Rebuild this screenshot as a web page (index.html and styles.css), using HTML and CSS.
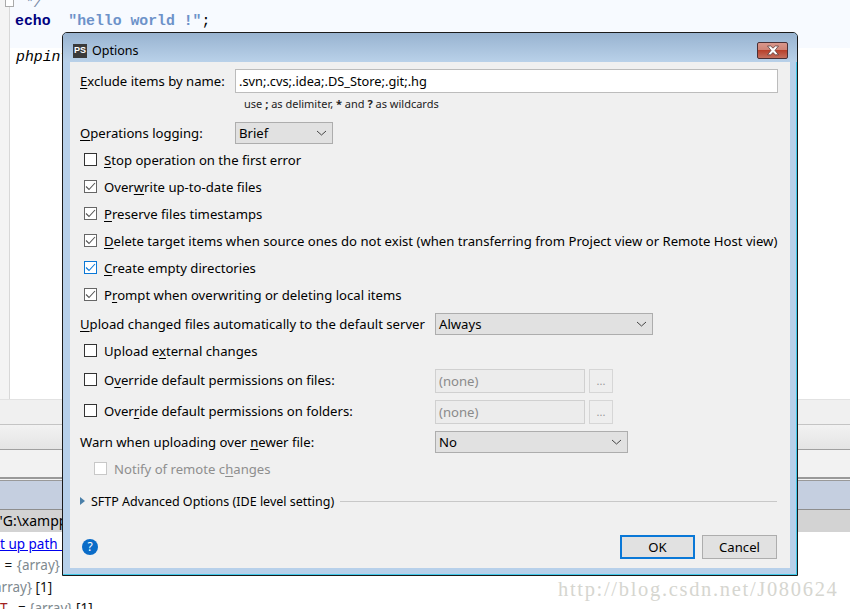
FILE: index.html
```html
<!DOCTYPE html>
<html lang="en">
<head>
<meta charset="utf-8">
<title>Options</title>
<link rel="stylesheet" href="styles.css">
</head>
<body>
<div class="ide">
  <div class="editor">
    <div class="gutter"><span class="fold"></span></div>
    <div class="code">
      <div class="code-band">
        <div class="code-line cmt"> */</div>
        <div class="code-line"><b class="kw">echo</b>  <span class="str">"hello world !"</span>;</div>
        <div class="code-line"> </div>
        <div class="code-line"><i>phpinfo();</i></div>
      </div>
    </div>
  </div>
  <div class="strip strip-a"></div>
  <div class="strip strip-b"></div>
  <div class="strip strip-c"></div>
  <div class="strip strip-c2"></div>
  <div class="strip strip-d"></div>
  <div class="strip strip-e">"G:\xampp</div>
  <div class="debug">
    <div class="dbg-link">t up path m</div>
    <div class="dbg-row">&nbsp;= <span class="gr">{array}</span> <span class="org">[</span>1]</div>
    <div class="dbg-row"><span class="gr">array}</span> [1]</div>
    <div class="dbg-row"><span class="red">T</span> &nbsp; = <span class="gr">{array}</span> [1]</div>
  </div>
</div>

<div class="dialog">
  <div class="titlebar">
    <span class="ps-logo">PS</span>
    <span class="title">Options</span>
    <span class="close">
      <svg width="16" height="11" viewBox="0 0 16 11"><path d="M2.5 1h3.2L8 3.2 10.3 1h3.2L10 5.4l3.5 4.4h-3.2L8 7.6 5.7 9.8H2.5L6 5.4z" fill="#fff" stroke="#5a3c3c" stroke-width=".8"/></svg>
    </span>
  </div>
  <div class="body">
    <div class="row row-exclude">
      <label class="lab lab-exclude"><u>E</u>xclude items by name:</label>
      <span class="field">.svn;.cvs;.idea;.DS_Store;.git;.hg</span>
    </div>
    <div class="hint">use <b>;</b> as delimiter, <b>*</b> and <b>?</b> as wildcards</div>
    <div class="row row-log">
      <label class="lab lab-log"><u>O</u>perations logging:</label>
      <span class="combo combo-brief">Brief<svg class="chev" width="11" height="6" viewBox="0 0 11 6"><path d="M1 1l4.5 4L10 1" fill="none" stroke="#444"/></svg></span>
    </div>
    <div class="checks">
      <div class="ck"><span class="box"></span><span><u>S</u>top operation on the first error</span></div>
      <div class="ck"><span class="box on"><svg width="11" height="9" viewBox="0 0 11 9"><path d="M1 4.5l3 3L10 1" fill="none" stroke="#555" stroke-width="1.1"/></svg></span><span>Over<u>w</u>rite up-to-date files</span></div>
      <div class="ck"><span class="box on"><svg width="11" height="9" viewBox="0 0 11 9"><path d="M1 4.5l3 3L10 1" fill="none" stroke="#555" stroke-width="1.1"/></svg></span><span><u>P</u>reserve files timestamps</span></div>
      <div class="ck"><span class="box on"><svg width="11" height="9" viewBox="0 0 11 9"><path d="M1 4.5l3 3L10 1" fill="none" stroke="#555" stroke-width="1.1"/></svg></span><span><u>D</u>elete target items when source ones do not exist (when transferring from Project view or Remote Host view)</span></div>
      <div class="ck"><span class="box focus"><svg width="11" height="9" viewBox="0 0 11 9"><path d="M1 4.5l3 3L10 1" fill="none" stroke="#0a78d7" stroke-width="1.1"/></svg></span><span><u>C</u>reate empty directories</span></div>
      <div class="ck"><span class="box on"><svg width="11" height="9" viewBox="0 0 11 9"><path d="M1 4.5l3 3L10 1" fill="none" stroke="#555" stroke-width="1.1"/></svg></span><span>P<u>r</u>ompt when overwriting or deleting local items</span></div>
    </div>
    <div class="row row-upload">
      <label class="lab lab-upload"><u>U</u>pload changed files automatically to the default server</label>
      <span class="combo combo-always">Always<svg class="chev" width="11" height="6" viewBox="0 0 11 6"><path d="M1 1l4.5 4L10 1" fill="none" stroke="#444"/></svg></span>
    </div>
    <div class="ck ck-ext"><span class="box"></span><span>Upload e<u>x</u>ternal changes</span></div>
    <div class="perm perm-files">
      <div class="ck"><span class="box"></span><span>O<u>v</u>erride default permissions on files:</span></div>
      <span class="none">(none)</span><span class="dots">...</span>
    </div>
    <div class="perm perm-folders">
      <div class="ck"><span class="box"></span><span>Over<u>r</u>ide default permissions on folders:</span></div>
      <span class="none">(none)</span><span class="dots">...</span>
    </div>
    <div class="row row-warn">
      <label class="lab lab-warn">Warn when uploading over <u>n</u>ewer file:</label>
      <span class="combo combo-no">No<svg class="chev" width="11" height="6" viewBox="0 0 11 6"><path d="M1 1l4.5 4L10 1" fill="none" stroke="#444"/></svg></span>
    </div>
    <div class="ck ck-notify"><span class="box off"></span><span>Notify of remote c<u>h</u>anges</span></div>
    <div class="sftp">
      <svg width="5" height="8" viewBox="0 0 5 8"><path d="M0 0l5 4-5 4z" fill="#4a7fa8"/></svg>
      <span class="sftp-t">SFTP Advanced Options (IDE level setting)</span>
      <span class="rule"></span>
    </div>
    <div class="foot">
      <span class="help">?</span>
      <span class="btn btn-ok">OK</span>
      <span class="btn">Cancel</span>
    </div>
  </div>
</div>
<div class="mark">http://blog.csdn.net/J080624</div>
</body>
</html>
```
FILE: styles.css
```css
html, body { margin: 0; padding: 0; }
body { width: 850px; height: 609px; overflow: hidden; background: #fff; position: relative; font-family: "Noto Sans", sans-serif; }
u { text-underline-offset: 2px; text-decoration-thickness: 1px; }

.ide { display: flex; flex-direction: column; height: 609px; }
.editor { height: 399px; flex: none; display: flex; background: #fff; overflow: hidden; }
.gutter { width: 9px; background: #f4f4f4; border-right: 1px solid #d8d8d8; position: relative; flex: none; }
.fold { position: absolute; left: 5px; top: -2px; width: 7px; height: 7px; border: 1px solid #aaa; background: #fff; }
.code { flex: 1; min-width: 0; }
.code-band { background: #f7faff; height: 48px; padding-left: 6px; display: flow-root; }
.code-line { font: 14.8px/20px "Liberation Mono", monospace; color: #000; white-space: pre; height: 20px; }
.code-band .code-line:first-child { margin-top: -7px; color: #7a8aa6; font-style: italic; }
.code-line:nth-child(2) { margin-top: -2px; }
.code-line:nth-child(3) { height: 16px; }
.kw { color: #000080; margin-left: -1px; }
.str { color: #6d92c9; font-weight: bold; }

.strip { flex: none; }
.strip-a { height: 24px; background: #f0f0f0; border-top: 1px solid #e2e2e2; border-bottom: 1px solid #c4c4c4; }
.strip-b { height: 24px; background: linear-gradient(#f2f2f2, #e4e4e4); border-bottom: 1px solid #a0a0a0; }
.strip-c { height: 27px; background: #f2f2f2; border-bottom: 2px solid #999; }
.strip-c2 { height: 1px; background: #f4f4f4; border-bottom: 1px solid #999; }
.strip-d { height: 28px; background: #c5cfe0; border-bottom: 1px solid #8e8e8e; }
.strip-e { height: 22px; background: #d3d3d3; font: 14px/22px "Noto Sans", sans-serif; color: #000; text-indent: -3px; overflow: hidden; white-space: nowrap; }
.debug { background: #fff; flex: 1; font: 13.5px/22px "Noto Sans", sans-serif; overflow: hidden; min-height: 0; }
.dbg-link { color: #0000ee; text-decoration: underline; height: 22px; font-size: 13.5px; white-space: nowrap; padding-top: 1px; box-sizing: content-box; margin-bottom: -1px; }
.dbg-row { height: 22px; color: #111; white-space: nowrap; }
.dbg-row:nth-child(2) { word-spacing: 1px; }
.dbg-row:nth-child(3) { margin-left: -6px; }
.dbg-row:nth-child(4) { height: 20px; margin-top: -1px; }
.gr { color: #808a90; }
.red { color: #a02020; }
.org { color: #b5701a; }

.dialog { position: absolute; left: 62px; top: 32px; width: 736px; height: 544px; box-sizing: border-box; border: 1px solid #1a1a1a; border-radius: 5px 5px 0 0; background: #b7d0ea; padding: 0 7px 7px; display: flex; flex-direction: column; box-shadow: inset 0 -1px 0 #40c8e8, inset -1px 0 0 #40c8e8; }
.titlebar { height: 29px; flex: none; margin: 0 -7px; padding: 6px 7px 0 10px; box-sizing: border-box; display: flex; align-items: center; background: linear-gradient(#98b3d0, #b9d1e9); border-radius: 4px 4px 0 0; }
.ps-logo { width: 14px; height: 14px; background: #3a3a3a; color: #fff; font: bold 9px/12px "Liberation Sans", sans-serif; text-align: center; margin-right: 5px; box-sizing: border-box; flex: none; }
.title { font-size: 12.5px; color: #000; flex: 1; }
.close { width: 31px; height: 17px; box-sizing: border-box; border: 1px solid #4a3036; border-radius: 2px; background: linear-gradient(#d9978c 0, #cf8476 45%, #b8412c 50%, #c4705f 100%); display: flex; align-items: center; justify-content: center; margin: 0 2px 0 0; flex: none; }
.close svg { display: block; }

.body { flex: 1; background: #f0f0f0; padding: 7px 12px 0 10px; display: flex; flex-direction: column; font-size: 13.14px; color: #000; min-height: 0; }
.row { display: flex; align-items: center; }
.lab { white-space: nowrap; }
.lab-exclude { width: 155px; flex: none; }
.field { flex: 1; height: 24px; box-sizing: border-box; border: 1px solid #bcbcbc; background: #fff; padding-left: 3px; line-height: 22px; color: #000; font-size: 12.8px; }
.hint { font-size: 11px; line-height: 14px; margin: 4px 0 0 164px; color: #222; }
.row-log { margin-top: 11px; }
.lab-log { width: 155px; flex: none; }
.combo { height: 22px; box-sizing: border-box; border: 1px solid #adadad; background: #e1e1e1; display: flex; align-items: center; justify-content: space-between; padding: 0 5px 0 3px; line-height: 20px; flex: none; }
.combo-brief { width: 98px; }
.combo-always { width: 218px; }
.combo-no { width: 193px; }
.chev { flex: none; }
.checks { display: flex; flex-direction: column; margin-top: 2px; }
.ck { display: flex; align-items: center; height: 27px; padding-left: 4px; white-space: nowrap; flex: none; }
.box { width: 13px; height: 13px; box-sizing: border-box; border: 1px solid #333; background: #fff; margin-right: 7px; flex: none; display: flex; align-items: center; justify-content: center; }
.box.on { border-color: #666; }
.box.focus { border-color: #0a78d7; }
.box.off { border-color: #c8c8c8; }
.box svg { display: block; }
.row-upload { margin-top: 2px; height: 27px; }
.lab-upload { width: 355px; flex: none; }
.ck-ext { height: 27px; }
.perm { display: flex; align-items: center; height: 31px; }
.perm .ck { width: 351px; height: 31px; box-sizing: content-box; flex: none; }
.none { width: 150px; height: 24px; box-sizing: border-box; border: 1px solid #d0d0d0; background: #ececec; color: #8a8a8a; padding-left: 3px; line-height: 22px; flex: none; margin-top: 2px; }
.dots { width: 24px; height: 24px; box-sizing: border-box; margin-left: 4px; margin-top: 2px; border: 1px solid #d6d6d6; background: #eee; color: #999; text-align: center; line-height: 22px; font-size: 11px; flex: none; }
.row-warn { height: 29px; margin-top: 1px; }
.lab-warn { width: 355px; flex: none; }
.ck-notify { height: 27px; margin-top: -1px; padding-left: 14px; color: #8e8e8e; }
.ck-notify u { text-decoration-color: #8e8e8e; }
.sftp { display: flex; align-items: center; height: 18px; margin-top: 10px; }
.sftp svg { flex: none; margin-right: 6px; }
.sftp-t { font-size: 12.5px; white-space: nowrap; }
.rule { flex: 1; height: 1px; background: #c8c8c8; margin-left: 6px; margin-right: 1px; }
.foot { display: flex; align-items: center; margin-top: auto; padding: 0 1px 9px 2px; gap: 7px; }
.help { width: 16px; height: 16px; border-radius: 50%; background: #0a6cc8; color: #fff; font: 12px/16px "Noto Sans", sans-serif; text-align: center; margin-right: auto; }
.btn { width: 75px; height: 24px; box-sizing: border-box; border: 1px solid #adadad; background: #e1e1e1; text-align: center; line-height: 22px; }
.btn-ok { border: 2px solid #0a78d7; line-height: 20px; }

.mark { position: absolute; left: 558px; top: 577px; font: 20.5px/24px "Liberation Serif", serif; letter-spacing: 1.68px; color: #d6d6d0; white-space: nowrap; }
```
